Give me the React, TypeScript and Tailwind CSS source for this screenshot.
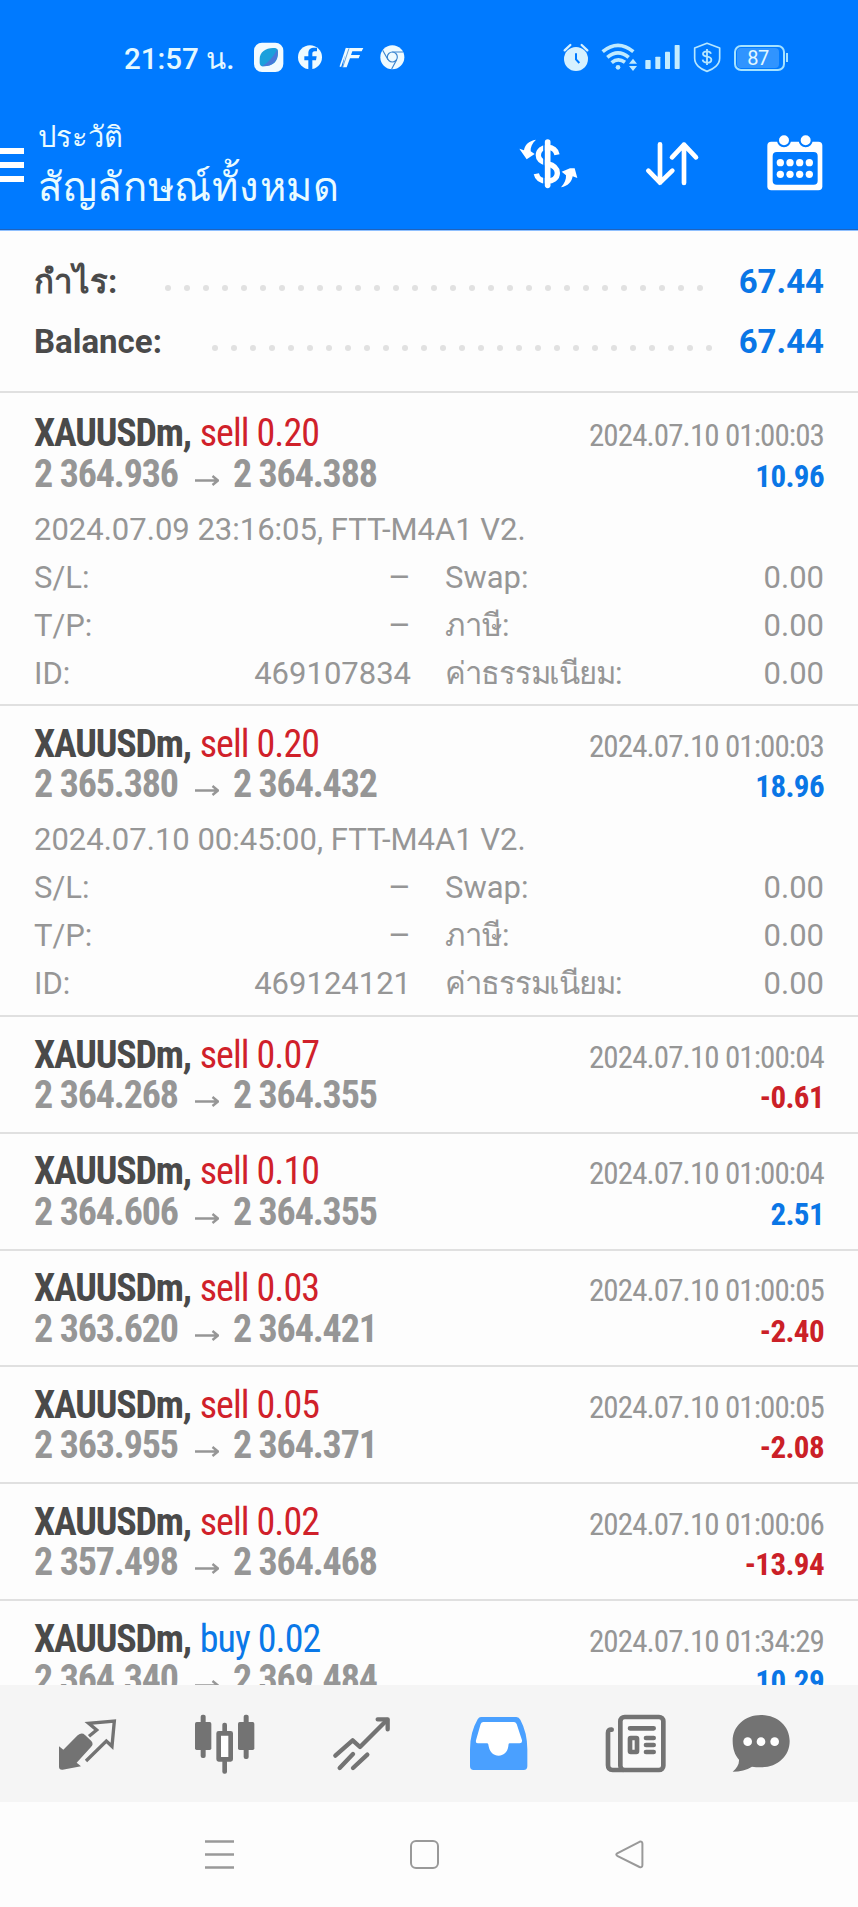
import React from 'react';
import clsx from 'clsx';

interface Deal {
  symbol: string;
  side: 'buy' | 'sell';
  volume: string;
  open: string;
  close: string;
  closedAt: string;
  profit: string;
  details?: {
    openedAt: string;
    comment: string;
    id: string;
  };
}

const deals: Deal[] = [
  {
    symbol: 'XAUUSDm', side: 'sell', volume: '0.20', open: '2 364.936', close: '2 364.388',
    closedAt: '2024.07.10 01:00:03', profit: '10.96',
    details: { openedAt: '2024.07.09 23:16:05', comment: 'FTT-M4A1 V2.', id: '469107834' },
  },
  {
    symbol: 'XAUUSDm', side: 'sell', volume: '0.20', open: '2 365.380', close: '2 364.432',
    closedAt: '2024.07.10 01:00:03', profit: '18.96',
    details: { openedAt: '2024.07.10 00:45:00', comment: 'FTT-M4A1 V2.', id: '469124121' },
  },
  { symbol: 'XAUUSDm', side: 'sell', volume: '0.07', open: '2 364.268', close: '2 364.355', closedAt: '2024.07.10 01:00:04', profit: '-0.61' },
  { symbol: 'XAUUSDm', side: 'sell', volume: '0.10', open: '2 364.606', close: '2 364.355', closedAt: '2024.07.10 01:00:04', profit: '2.51' },
  { symbol: 'XAUUSDm', side: 'sell', volume: '0.03', open: '2 363.620', close: '2 364.421', closedAt: '2024.07.10 01:00:05', profit: '-2.40' },
  { symbol: 'XAUUSDm', side: 'sell', volume: '0.05', open: '2 363.955', close: '2 364.371', closedAt: '2024.07.10 01:00:05', profit: '-2.08' },
  { symbol: 'XAUUSDm', side: 'sell', volume: '0.02', open: '2 357.498', close: '2 364.468', closedAt: '2024.07.10 01:00:06', profit: '-13.94' },
  { symbol: 'XAUUSDm', side: 'buy', volume: '0.02', open: '2 364.340', close: '2 369.484', closedAt: '2024.07.10 01:34:29', profit: '10.29' },
];

function StatusBar() {
  return (
    <div className="flex h-[31px] items-center pl-[124px] pr-[70px] text-[#e4f8ff]">
      <span className="w-[130px] pt-1 whitespace-nowrap text-[29.5px] leading-[31px] font-medium">21:57 น.</span>

      <svg width="30" height="31" viewBox="762 66 90 93">
        <rect x="762" y="68" width="88" height="88" rx="24" fill="#f2fbff" />
        <path d="M779 118C779 94 800 82 824 84Q834 85 834 96C835 122 822 139 790 139Q779 139 779 128Z" fill="#1ba0dc" />
        <path d="M832 87C838 120 820 140 786 139C802 130 822 110 832 87Z" fill="#4a78d8" />
      </svg>
      <svg className="ml-[13px]" width="26" height="31" viewBox="891 66 78 93">
        <circle cx="930" cy="112" r="36" fill="#effbff" />
        <path d="M925 149V121H913V109H925V100C925 88 932 83 943 83H951V94H944C939 94 937 97 937 101V109H950L948 121H937V149Z" fill="#007aff" />
      </svg>
      <svg className="ml-4" width="25" height="31" viewBox="1017 66 75 93">
        <path d="M1038 84H1090L1085 94H1057L1053 105H1080L1076 115H1050L1040 142H1028Z" fill="#effbff" />
        <path d="M1040 84L1021 140" stroke="#effbff" strokeWidth="5" />
        <path d="M1047 85L1028 142" stroke="#4d8fd0" strokeWidth="2.5" />
      </svg>
      <svg className="ml-4" width="25" height="31" viewBox="1140 66 75 93">
        <circle cx="1177" cy="112" r="36" fill="#effbff" />
        <g fill="none" stroke="#3c86cf" strokeWidth="3.5">
          <circle cx="1177" cy="111" r="15" />
          <path d="M1177 96H1209M1164 119L1148 91M1190 119L1175 147" />
        </g>
      </svg>

      <div className="grow" />

      <svg width="26" height="31" viewBox="396 66 78 93">
        <circle cx="435" cy="117" r="36" fill="#d6f1ff" />
        <path d="M401 91L418 75M469 91L452 75" stroke="#d6f1ff" strokeWidth="7" strokeLinecap="round" />
        <path d="M435 100V118L445 129" stroke="#007aff" strokeWidth="6" fill="none" />
      </svg>
      <svg className="ml-3" width="37" height="31" viewBox="510 66 111 93">
        <g fill="none" stroke="#bfeaff" strokeWidth="11">
          <path d="M515 95Q561 57 607 95" />
          <path d="M529 112Q561 85 593 112" />
          <path d="M542 128Q561 112 582 127" />
        </g>
        <circle cx="561" cy="142" r="7" fill="#bfeaff" />
        <path d="M594 131L606 116L618 131ZM594 138L606 153L618 138Z" fill="#bfeaff" />
      </svg>
      <svg className="ml-[7px]" width="36" height="31" viewBox="642 66 108 93" fill="#c4ecff">
        <rect x="643" y="120" width="16" height="27" rx="2" />
        <rect x="673" y="110" width="15" height="37" rx="2" />
        <rect x="702" y="95" width="15" height="52" rx="2" />
        <rect x="731" y="75" width="15" height="72" rx="2" />
      </svg>
      <svg className="ml-3" width="28" height="31" viewBox="786 66 84 93" fill="none" stroke="#b4e6ff">
        <path d="M828 70L866 84V115C866 134 848 148 828 154C808 148 791 134 791 115V84Z" strokeWidth="5" strokeLinejoin="round" />
        <path d="M840 101C838 95 833 94 828 94C821 94 816 97 816 102C816 114 841 106 841 119C841 125 835 128 828 128C821 128 816 125 815 119M828 87V135" strokeWidth="5.5" />
      </svg>
      <div className="ml-[13px] flex items-center">
        <div className="flex h-[26px] w-[51px] items-center rounded-[7px] border-2 border-[#a5e2ff] p-px">
          <div className="flex h-full w-[42px] items-center justify-center rounded-[4px] bg-[#3094ff] text-[20px] tracking-[-0.5px]">87</div>
        </div>
        <div className="ml-px h-[9px] w-[2px] bg-[#a5e2ff]" />
      </div>
    </div>
  );
}

function Toolbar() {
  return (
    <div className="flex grow text-[#e9fbff]">
      <div className="mt-[75px] flex w-6 flex-col gap-2">
        <div className="h-[6px] bg-white" />
        <div className="h-[6px] bg-white" />
        <div className="h-[6px] bg-white" />
      </div>
      <div className="ml-[14px] mt-[41px] grow">
        <div className="text-[29px] leading-[46px]">ประวัติ</div>
        <div className="text-[40px] leading-[56px] tracking-[0.7px]">สัญลักษณ์ทั้งหมด</div>
      </div>
      <div className="mt-[61px] flex gap-[66px] pr-[34px]">
        <svg width="60" height="58" viewBox="264 342 180 174">
          <path
            d="M381 404C378 388 366 382 352 382C337 382 325 391 325 406C325 421 338 427 352 431C368 435 382 442 382 459C382 475 368 483 352 483C334 483 322 476 319 461"
            fill="none" stroke="#fff" strokeWidth="16"
          />
          <path d="M342 372V500" stroke="#007aff" strokeWidth="5" />
          <path d="M353 366V496" stroke="#fff" strokeWidth="17" strokeLinecap="round" />
          <path d="M268 386L282 391C284 376 296 362 318 359C306 370 301 382 302 394L314 402L290 418Z" fill="#fff" />
          <path d="M442 474L428 469C426 484 414 499 393 502C404 490 409 478 408 466L395 455L420 445L434 445Z" fill="#fff" />
        </svg>
        <svg width="56" height="58" viewBox="642 342 168 174" fill="none" stroke="#fff" strokeWidth="14" strokeLinecap="round" strokeLinejoin="round">
          <path d="M690 373V488M655 452L690 488L727 452" />
          <path d="M762 489V374M726 412L762 374L798 412" />
        </svg>
        <svg width="58" height="58" viewBox="1008 342 174 174" fill="#fff">
          <rect x="1012" y="365" width="165" height="146" rx="12" />
          <rect x="1028" y="396" width="135" height="98" rx="12" fill="#007aff" />
          <circle cx="1062" cy="361" r="18" stroke="#007aff" strokeWidth="6" />
          <circle cx="1127" cy="361" r="18" stroke="#007aff" strokeWidth="6" />
          {[428, 463].map((cy) => [1051, 1080, 1109, 1138].map((cx) => (
            <circle key={`${cx}-${cy}`} cx={cx} cy={cy} r="11" />
          )))}
        </svg>
      </div>
    </div>
  );
}

function SummaryRow({ label, value, dots, leader }: { label: string; value: string; dots: number; leader: string }) {
  return (
    <div className="flex h-[60px] items-center px-[34px] text-[33px] leading-[60px] font-bold">
      <span className="text-[#4a4a4a]">{label}</span>
      <div className="grow" />
      <div className={clsx('flex gap-[13px] pt-[11px]', leader)}>
        {Array.from({ length: dots }, (_, i) => (
          <span key={i} className="size-[6px] rounded-full bg-[#e1e1e1]" />
        ))}
      </div>
      <span className="text-[#0a76e6]">{value}</span>
    </div>
  );
}

function DetailRow({ left, leftValue, right }: { left: string; leftValue: string; right: string }) {
  return (
    <div className="flex h-12">
      <span className="grow">{left}</span>
      <span className={clsx(leftValue === '–' && 'text-[35px]')}>{leftValue}</span>
      <span className={clsx('ml-[34px] w-[300px]', right.length > 8 && 'tracking-[-1.1px]')}>{right}</span>
      <span className="w-[79px] text-right">0.00</span>
    </div>
  );
}

function DealRow({ deal, first }: { deal: Deal; first: boolean }) {
  const { details } = deal;

  return (
    <div
      className={clsx(
        'shrink-0 border-b-2 border-[#e0e0e0] px-[34px] text-[#969696]',
        first ? 'pt-5' : 'pt-[17.6px]',
        first ? 'h-[313px]' : details ? 'h-[311px]' : 'h-[116.8px]',
      )}
    >
      <div className="flex h-[40.5px] items-baseline justify-between font-stretch-condensed">
        <div className="text-[38px] leading-10">
          <span className="font-bold tracking-[-1.2px] text-[#4a4a4a]">{deal.symbol},</span>{' '}
          <span className={clsx('tracking-[-0.9px]', deal.side === 'sell' ? 'text-[#d0212a]' : 'text-[#0a78e8]')}>
            {deal.side} {deal.volume}
          </span>
        </div>
        <span className="text-[31px] leading-10 tracking-[-0.9px]">{deal.closedAt}</span>
      </div>
      <div className="flex h-10 items-baseline justify-between font-bold font-stretch-condensed">
        <div className="flex items-baseline text-[38px] leading-10 tracking-[-1.15px]">
          <span>{deal.open}</span>
          <svg className="ml-[17px] mr-[14px]" width="24" height="12" viewBox="0 0 24 12" fill="none" stroke="#969696" strokeWidth="2.4">
            <path d="M0 5.5H23M17.5 1L23 5.5L17.5 10" />
          </svg>
          <span>{deal.close}</span>
        </div>
        <span className={clsx('text-[31px] leading-10 tracking-[-0.6px]', deal.profit.startsWith('-') ? 'text-[#cb2027]' : 'text-[#0a76e6]')}>
          {deal.profit}
        </span>
      </div>
      {details && (
        <div className="mt-3 text-[31px] leading-[48px]">
          <div className="h-12">{details.openedAt}, {details.comment}</div>
          <DetailRow left="S/L:" leftValue="–" right="Swap:" />
          <DetailRow left="T/P:" leftValue="–" right="ภาษี:" />
          <DetailRow left="ID:" leftValue={details.id} right="ค่าธรรมเนียม:" />
        </div>
      )}
    </div>
  );
}

function TabBar() {
  return (
    <div className="flex h-[117px] shrink-0 items-center bg-[#f5f5f5] pl-[19px]">
      <div className="flex w-[137px] justify-center">
        <svg width="59" height="62" viewBox="174 96 177 186">
          <path d="M177 196L190 206L233 163Q245 153 255 162L274 180Q282 190 273 198L230 245L243 256L188 266Q177 267 177 257Z" fill="#737373" />
          <path d="M267 166L290 147L266 127L343 120L336 196L319 180L258 240" fill="none" stroke="#737373" strokeWidth="10" />
        </svg>
      </div>
      <div className="flex w-[137px] justify-center">
        <svg width="62" height="62" viewBox="579 96 186 186">
          <g fill="#737373">
            <rect x="599" y="101" width="15" height="130" rx="6" />
            <rect x="582" y="123" width="49" height="84" rx="5" />
            <rect x="728" y="101" width="15" height="133" rx="6" />
            <rect x="711" y="123" width="49" height="84" rx="5" />
            <rect x="664" y="125" width="14" height="34" rx="6" />
            <rect x="664" y="236" width="14" height="42" rx="6" />
          </g>
          <rect x="653" y="157" width="36" height="78" fill="#fff" stroke="#737373" strokeWidth="14" strokeLinejoin="round" />
        </svg>
      </div>
      <div className="flex w-[137px] justify-center">
        <svg width="59" height="62" viewBox="993 96 177 186" fill="none" stroke="#737373" strokeWidth="13" strokeLinecap="round" strokeLinejoin="round">
          <path d="M1003 224L1055 178L1077 198L1158 117" />
          <path d="M1130 115H1160V145" />
          <path d="M1016 261L1056 219M1056 261L1099 221" />
        </svg>
      </div>
      <div className="flex w-[137px] justify-center">
        <svg width="60" height="62" viewBox="114 96 180 186">
          <path d="M150 108H256Q264 108 268 116Q289 155 289 205V256Q289 267 278 267H128Q117 267 117 256V205Q117 155 140 115Q144 108 150 108Z" fill="#4aa0ff" />
          <path d="M157 123H249Q254 123 257 129L273 178Q274 187 266 187H236C232 187 233 190 232 196C229 215 217 224 203 224C188 224 176 214 173 196C172 190 172 187 168 187H141Q133 187 135 178L149 129Q151 123 157 123Z" fill="#fff" />
        </svg>
      </div>
      <div className="flex w-[137px] justify-center">
        <svg width="62" height="62" viewBox="525 96 186 186" fill="none" stroke="#737373" strokeWidth="14" strokeLinecap="round">
          <path d="M545 146Q534 145 534 156V252Q534 267 548 267H580" />
          <rect x="571" y="108" width="129" height="159" rx="13" fill="#fafafa" />
          <path d="M600 142H671M648 171H671M648 192H671M648 213H671" />
          <rect x="600" y="171" width="21" height="42" rx="2" />
        </svg>
      </div>
      <div className="flex w-[114px] justify-center">
        <svg width="60" height="62" viewBox="903 96 180 186">
          <path d="M993 102C1042 102 1079 135 1079 180C1079 226 1042 259 993 259C982 259 974 258 966 257C950 267 930 272 908 272C920 262 928 250 927 236C914 222 908 202 908 180C908 135 945 102 993 102Z" fill="#737373" />
          <g fill="#fff">
            <circle cx="953" cy="182" r="13" />
            <circle cx="993" cy="182" r="13" />
            <circle cx="1034" cy="182" r="13" />
          </g>
        </svg>
      </div>
    </div>
  );
}

function SystemNav() {
  return (
    <div className="flex h-[105px] shrink-0 items-center bg-[#fdfdfd] pl-[117px]">
      <div className="flex w-[205px] justify-center">
        <svg width="29" height="29" viewBox="0 0 29 29" stroke="#999" strokeWidth="2.4">
          <path d="M0 1.5H29M0 14.5H29M0 27.5H29" />
        </svg>
      </div>
      <div className="flex w-[205px] justify-center">
        <div className="size-[29px] rounded-[6px] border-2 border-[#999]" />
      </div>
      <div className="flex w-[205px] justify-center">
        <svg width="29" height="29" viewBox="0 0 29 29" fill="none" stroke="#999" strokeWidth="2" strokeLinejoin="round">
          <path d="M2.2 13.3L24.5 1.8Q27.3 1 27.4 3.6V25Q27.3 28 24.5 27L2.2 15.8Q0.4 14.5 2.2 13.3Z" />
        </svg>
      </div>
    </div>
  );
}

export default function App() {
  return (
    <div className="flex h-[1907px] w-[858px] flex-col overflow-hidden bg-[#fdfdfd] font-[Roboto,'Noto_Sans',sans-serif]">
      <header className="flex h-[231px] shrink-0 flex-col border-b border-[#8fc0ff] bg-[#007aff] pt-[42px] shadow-[inset_0_-1px_0_#1f63bd]">
        <StatusBar />
        <Toolbar />
      </header>

      <section className="h-[162px] shrink-0 border-b-2 border-[#e0e0e0] pt-[21px]">
        <SummaryRow label="กำไร:" value="67.44" dots={29} leader="mr-[36px]" />
        <SummaryRow label="Balance:" value="67.44" dots={27} leader="mr-[27px]" />
      </section>

      <main className="flex min-h-0 grow flex-col overflow-hidden">
        {deals.map((deal, i) => (
          <DealRow key={`${deal.closedAt}-${deal.open}`} deal={deal} first={i === 0} />
        ))}
      </main>

      <TabBar />
      <SystemNav />
    </div>
  );
}
